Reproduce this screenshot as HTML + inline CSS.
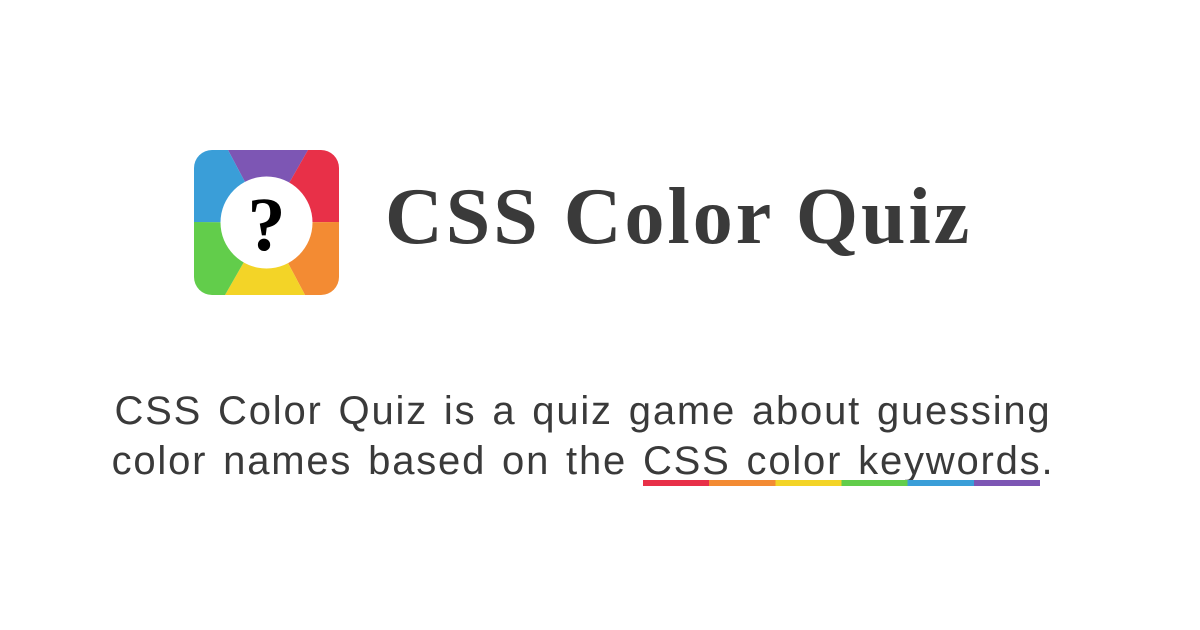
<!DOCTYPE html>
<html><head><style>
body{margin:0;width:1200px;height:630px;background:#fff;overflow:hidden;position:relative}
.t{position:absolute;left:385px;top:172px;font:bold 80px "Liberation Serif",serif;color:#3a3a3a;white-space:nowrap;letter-spacing:3px}
.p{position:absolute;left:0;width:1166px;top:386px;text-align:center;font:40px/50px "Liberation Sans",sans-serif;color:#3a3a3a;letter-spacing:1.8px;word-spacing:3px}
.u{position:relative;display:inline-block}
.bar{position:absolute;left:0;right:2px;bottom:0;height:6px;background:linear-gradient(90deg,#e83048 0 16.66%,#f38b33 16.66% 33.33%,#f3d427 33.33% 50%,#62cd4b 50% 66.66%,#3a9ed8 66.66% 83.33%,#7d56b4 83.33%)}
</style></head><body>
<svg style="position:absolute;left:194px;top:150px" width="145" height="145" viewBox="0 0 145 145">
<defs><clipPath id="c"><rect width="145" height="145" rx="18"/></clipPath></defs>
<g clip-path="url(#c)">
<polygon points="72.5,72.5 34,0 114,0" fill="#7d56b4"/>
<polygon points="72.5,72.5 114,0 145,0 145,72" fill="#e83048"/>
<polygon points="72.5,72.5 145,72 145,145 111,145" fill="#f38b33"/>
<polygon points="72.5,72.5 111,145 31,145" fill="#f3d427"/>
<polygon points="72.5,72.5 31,145 0,145 0,72" fill="#62cd4b"/>
<polygon points="72.5,72.5 0,72 0,0 34,0" fill="#3a9ed8"/>
<circle cx="72.5" cy="72.5" r="46" fill="#fff"/>
<text x="72.5" y="100" text-anchor="middle" font-family="Liberation Serif,serif" font-weight="bold" font-size="76" fill="#000">?</text>
</g></svg>
<div class="t">CSS Color Quiz</div>
<div class="p">CSS Color Quiz is a quiz game about guessing<br>color names based on the <span class="u">CSS color keywords<span class="bar"></span></span>.</div>
</body></html>
